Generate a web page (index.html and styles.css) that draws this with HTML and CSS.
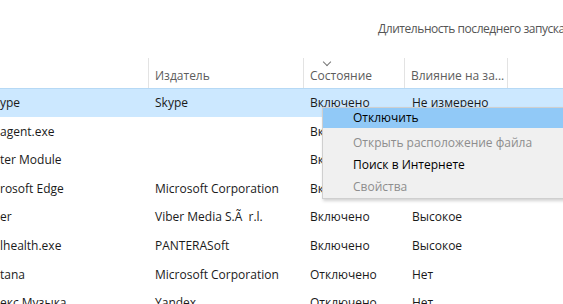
FILE: index.html
```html
<!DOCTYPE html>
<html lang="ru">
<head>
    <meta charset="UTF-8">
    <title>Автозагрузка</title>
    <link rel="stylesheet" href="styles.css">
</head>
<body>
    <div class="topbar">Длительность последнего запуска BIOS: 0.0 секунд</div>

    <div class="grid header">
        <div class="cell"></div>
        <div class="cell col">Издатель</div>
        <div class="cell col sorted"><span class="chevron"></span>Состояние</div>
        <div class="cell col last">Влияние на за...</div>
    </div>

    <div class="rows">
        <div class="grid row selected">
            <div class="cell name">ype</div>
            <div class="cell">Skype</div>
            <div class="cell">Включено</div>
            <div class="cell">Не измерено</div>
        </div>
        <div class="grid row">
            <div class="cell name">agent.exe</div>
            <div class="cell"></div>
            <div class="cell">Включено</div>
            <div class="cell">Не измерено</div>
        </div>
        <div class="grid row">
            <div class="cell name">ter Module</div>
            <div class="cell"></div>
            <div class="cell">Включено</div>
            <div class="cell">Не измерено</div>
        </div>
        <div class="grid row">
            <div class="cell name">rosoft Edge</div>
            <div class="cell">Microsoft Corporation</div>
            <div class="cell">Включено</div>
            <div class="cell">Не измерено</div>
        </div>
        <div class="grid row">
            <div class="cell name">er</div>
            <div class="cell">Viber Media S.Ã&nbsp; r.l.</div>
            <div class="cell">Включено</div>
            <div class="cell">Высокое</div>
        </div>
        <div class="grid row">
            <div class="cell name">lhealth.exe</div>
            <div class="cell">PANTERASoft</div>
            <div class="cell">Включено</div>
            <div class="cell">Высокое</div>
        </div>
        <div class="grid row">
            <div class="cell name">tana</div>
            <div class="cell">Microsoft Corporation</div>
            <div class="cell">Отключено</div>
            <div class="cell">Нет</div>
        </div>
        <div class="grid row">
            <div class="cell name">екс Музыка</div>
            <div class="cell">Yandex</div>
            <div class="cell">Отключено</div>
            <div class="cell">Нет</div>
        </div>
    </div>

    <!-- контекстное меню поверх таблицы -->
    <div class="menu">
        <div class="item active">Отключить</div>
        <div class="sep"></div>
        <div class="item disabled">Открыть расположение файла</div>
        <div class="item">Поиск в Интернете</div>
        <div class="item disabled">Свойства</div>
    </div>
</body>
</html>
```

FILE: styles.css
```css
body {
    margin: 0;
    background-color: white;
    font-family: "Open Sans", "Noto Sans", sans-serif;
    font-size: 12px;
    color: #1a1a1a;
    overflow: hidden;
    position: relative;
    height: 304px;
}

.topbar {
    height: 58px;
    box-sizing: border-box;
    padding: 20px 0 0 378px;
    color: #555;
    letter-spacing: -0.45px;
    white-space: nowrap;
}

.grid {
    display: grid;
    grid-template-columns: 148px 155px 101px 104px 1fr;
}

.cell {
    white-space: nowrap;
    overflow: hidden;
}

.header {
    height: 30px;
    color: #5c5c5c;
}

.header .col {
    border-left: 1px solid #e3e3e3;
    padding: 9px 0 0 6px;
    position: relative;
}

.header .last {
    border-right: 1px solid #e3e3e3;
}

.chevron {
    position: absolute;
    left: 20px;
    top: 1px;
    width: 5px;
    height: 5px;
    border-right: 1px solid #777;
    border-bottom: 1px solid #777;
    transform: rotate(45deg);
}

.row {
    height: 28.6px;
    line-height: 28px;
}

.row .cell {
    padding: 1px 0 0 7px;
}

.row .cell:nth-child(4) {
    padding-left: 8px;
}

.row .name {
    padding-left: 0;
}

.selected {
    background-color: #cce8ff;
    box-shadow: inset 0 1px 0 #b6d9f5;
}

.menu {
    position: absolute;
    left: 322px;
    top: 107px;
    width: 260px;
    background-color: #f0f0f0;
    border: 1px solid #cfcfcf;
    box-shadow: 1px 2px 3px rgba(0,0,0,0.18);
    color: #000;
}

.item {
    height: 22px;
    line-height: 22px;
    padding-left: 30px;
    white-space: nowrap;
}

.item.active {
    height: 20px;
    line-height: 20px;
    background-color: #91c9f7;
}

.item.disabled {
    color: #8d8d8d;
}

.sep {
    height: 4px;
}
```
